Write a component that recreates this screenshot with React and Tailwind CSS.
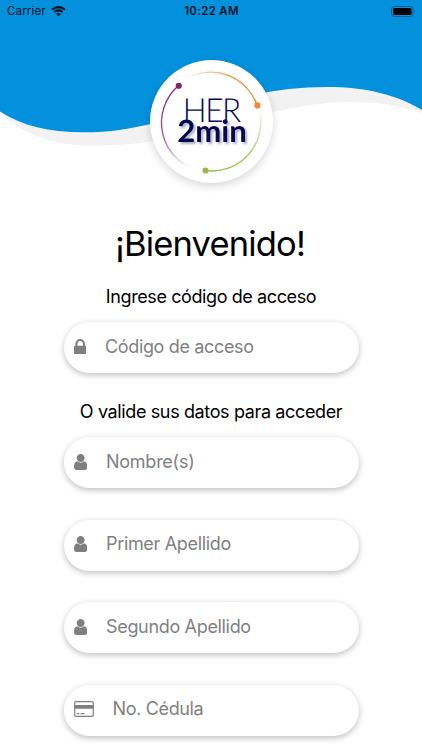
import React from "react";

function LockIcon() {
  return (
    <svg viewBox="320 128 1152 1408" className="h-[15px] w-[12.3px]" fill="currentColor">
      <path d="M640 768h512v-192q0-106-75-181t-181-75-181 75-75 181v192zm832 96v576q0 40-28 68t-68 28h-960q-40 0-68-28t-28-68v-576q0-40 28-68t68-28h32v-192q0-184 132-316t316-132 316 132 132 316v192h32q40 0 68 28t28 68z" />
    </svg>
  );
}

function UserIcon() {
  return (
    <svg viewBox="256 128 1280 1536" className="h-[16px] w-[13.3px]" fill="currentColor">
      <path d="M1536 1399q0 109-62.5 187t-150.5 78h-854q-88 0-150.5-78t-62.5-187q0-85 8.5-160.5t31.5-152 58.5-131 94-89 134.5-34.5q131 128 313 128t313-128q76 0 134.5 34.5t94 89 58.5 131 31.5 152 8.5 160.5zm-256-887q0 159-112.5 271.5t-271.5 112.5-271.5-112.5-112.5-271.5 112.5-271.5 271.5-112.5 271.5 112.5 112.5 271.5z" />
    </svg>
  );
}

function CardIcon() {
  return (
    <svg viewBox="0 0 20 16" className="h-4 w-5" fill="none">
      <rect x="0.7" y="0.7" width="18.6" height="14.6" rx="1.3" stroke="currentColor" strokeWidth="1.2" />
      <path d="M0.7 4h18.6v3.8H0.7zM2.7 12h2.6v1.3H2.7zM6.6 12h3.9v1.3H6.6z" fill="currentColor" />
    </svg>
  );
}

function Field({ icon, label, textClass }) {
  return (
    <div className="flex h-[51px] w-[295px] shrink-0 items-center rounded-full bg-white pb-[2px] pl-[10px] text-[#7f7f7f] shadow-[0_2px_6px_rgba(0,0,0,0.26)]">
      <span className="flex w-[20px] shrink-0">{icon}</span>
      <span className={`whitespace-nowrap text-[18px] leading-6 ${textClass}`}>{label}</span>
    </div>
  );
}

function StatusBar() {
  return (
    <div className="relative grid h-[22px] grid-cols-3 items-center pl-[7px] pr-[6px] text-[#03111c]">
      <div className="flex items-center gap-[5px]">
        <span className="pt-[2px] text-[11.5px] leading-none tracking-[0.15px]">Carrier</span>
        <svg viewBox="0 0 16 12" className="h-[12px] w-[15px]" fill="none" stroke="currentColor" strokeWidth="2.3">
          <path d="M1.2 4.6a9.7 9.7 0 0 1 13.6 0M3.7 7.1a6.1 6.1 0 0 1 8.6 0" />
          <path d="M8 11.5 5.6 9.1a3.3 3.3 0 0 1 4.8 0z" fill="currentColor" stroke="none" />
        </svg>
      </div>
      <span className="pt-[2px] text-center text-[11.4px] font-semibold leading-none tracking-[0.35px]">10:22 AM</span>
      <svg viewBox="0 0 25 11" className="h-[11px] w-[25px] justify-self-end">
        <rect x="0.5" y="0.5" width="21.5" height="10" rx="2.7" fill="none" stroke="#075f93" />
        <rect x="2" y="2" width="18.5" height="7" rx="1.5" fill="#000" />
        <path d="M23.2 3.8q1.5 1.7 0 3.4z" fill="#075f93" />
      </svg>
    </div>
  );
}

function Logo() {
  return (
    <svg viewBox="0 0 124 124" className="h-[123px] w-[123px] rounded-full bg-white shadow-[0_3px_8px_rgba(0,0,0,0.16)] [text-rendering:geometricPrecision]">
      <defs>
        <linearGradient id="orange" x1="37" y1="15" x2="108" y2="46" gradientUnits="userSpaceOnUse">
          <stop offset="0" stopColor="#f08c32" stopOpacity="0" />
          <stop offset="0.5" stopColor="#ef9a50" />
          <stop offset="1" stopColor="#f0892c" />
        </linearGradient>
        <linearGradient id="green" x1="111" y1="56" x2="56" y2="112" gradientUnits="userSpaceOnUse">
          <stop offset="0" stopColor="#91bd42" stopOpacity="0.2" />
          <stop offset="0.45" stopColor="#a7c96a" />
          <stop offset="1" stopColor="#91bd42" />
        </linearGradient>
        <linearGradient id="purple" x1="28" y1="27" x2="43" y2="109" gradientUnits="userSpaceOnUse">
          <stop offset="0" stopColor="#822764" />
          <stop offset="0.6" stopColor="#a5679a" />
          <stop offset="1" stopColor="#a5679a" stopOpacity="0" />
        </linearGradient>
      </defs>
      <g fill="none" strokeWidth="1.4">
        <path d="M37 18.5A49.5 49.5 0 0 1 108 46" stroke="url(#orange)" />
        <path d="M111.2 55A49.5 49.5 0 0 1 56 111.5" stroke="url(#green)" />
        <path d="M28.5 26A49.5 49.5 0 0 0 48 111" stroke="url(#purple)" />
      </g>
      <circle cx="29" cy="26" r="3.1" fill="#822764" />
      <circle cx="108.3" cy="45.8" r="3.1" fill="#f18a30" />
      <circle cx="56" cy="111.4" r="3.1" fill="#91bd42" />
      <text x="33" y="62" textLength="57.5" lengthAdjust="spacingAndGlyphs" className="fill-[#07064f] font-[family-name:Lato] text-[33.5px] font-light tracking-[-1.5px]">HER</text>
      <text x="27.5" y="82.5" textLength="70" lengthAdjust="spacingAndGlyphs" className="fill-[#07064f] font-[family-name:Lato] text-[31px] font-bold drop-shadow-[2px_2.5px_1px_rgba(16,13,86,0.35)]">2min</text>
    </svg>
  );
}

export default function App() {
  return (
    <main className="flex h-[750px] w-[422px] flex-col overflow-hidden bg-white font-['Inter','Liberation_Sans',sans-serif] text-black">
      <header className="relative h-[184px] shrink-0">
        <svg viewBox="0 0 422 184" className="absolute inset-0 h-full w-full">
          <path d="M0 0H422V113C398 105 376 102 350 102C306 102 252 116 207 129C158 143 127 145.5 90 145.5C48 145.5 20 131 0 113Z" fill="#f2f2f2" />
          <path d="M0 0H422V110C397 95 367 87 327 87C260 87 211 106 158 122C132 129 110 132.3 83 132.3C49 132.3 22 126 0 111.5Z" fill="#0391dd" />
        </svg>
        <StatusBar />
        <div className="relative mt-[37.5px] flex justify-center pl-px">
          <Logo />
        </div>
      </header>
      <section className="flex flex-col items-center">
        <h1 className="mt-[38px] whitespace-nowrap pr-[2px] text-[34.5px] leading-[44px] tracking-[-0.85px]">¡Bienvenido!</h1>
        <p className="mt-[19px] whitespace-nowrap text-[18px] leading-6 tracking-[-0.4px]">Ingrese código de acceso</p>
        <div className="mt-[13px]">
          <Field icon={<LockIcon />} label="Código de acceso" textClass="ml-[11.5px] tracking-[-0.35px]" />
        </div>
        <p className="mt-[27px] whitespace-nowrap text-[18px] leading-6 tracking-[-0.37px]">O valide sus datos para acceder</p>
        <div className="mt-[13px] flex flex-col gap-[31.5px]">
          <Field icon={<UserIcon />} label="Nombre(s)" textClass="ml-[12.5px] tracking-[-0.25px]" />
          <Field icon={<UserIcon />} label="Primer Apellido" textClass="ml-[12.5px] tracking-[-0.33px]" />
          <Field icon={<UserIcon />} label="Segundo Apellido" textClass="ml-[12.5px] tracking-[-0.33px]" />
          <Field icon={<CardIcon />} label="No. Cédula" textClass="ml-[19px] tracking-[-0.35px]" />
        </div>
      </section>
    </main>
  );
}
